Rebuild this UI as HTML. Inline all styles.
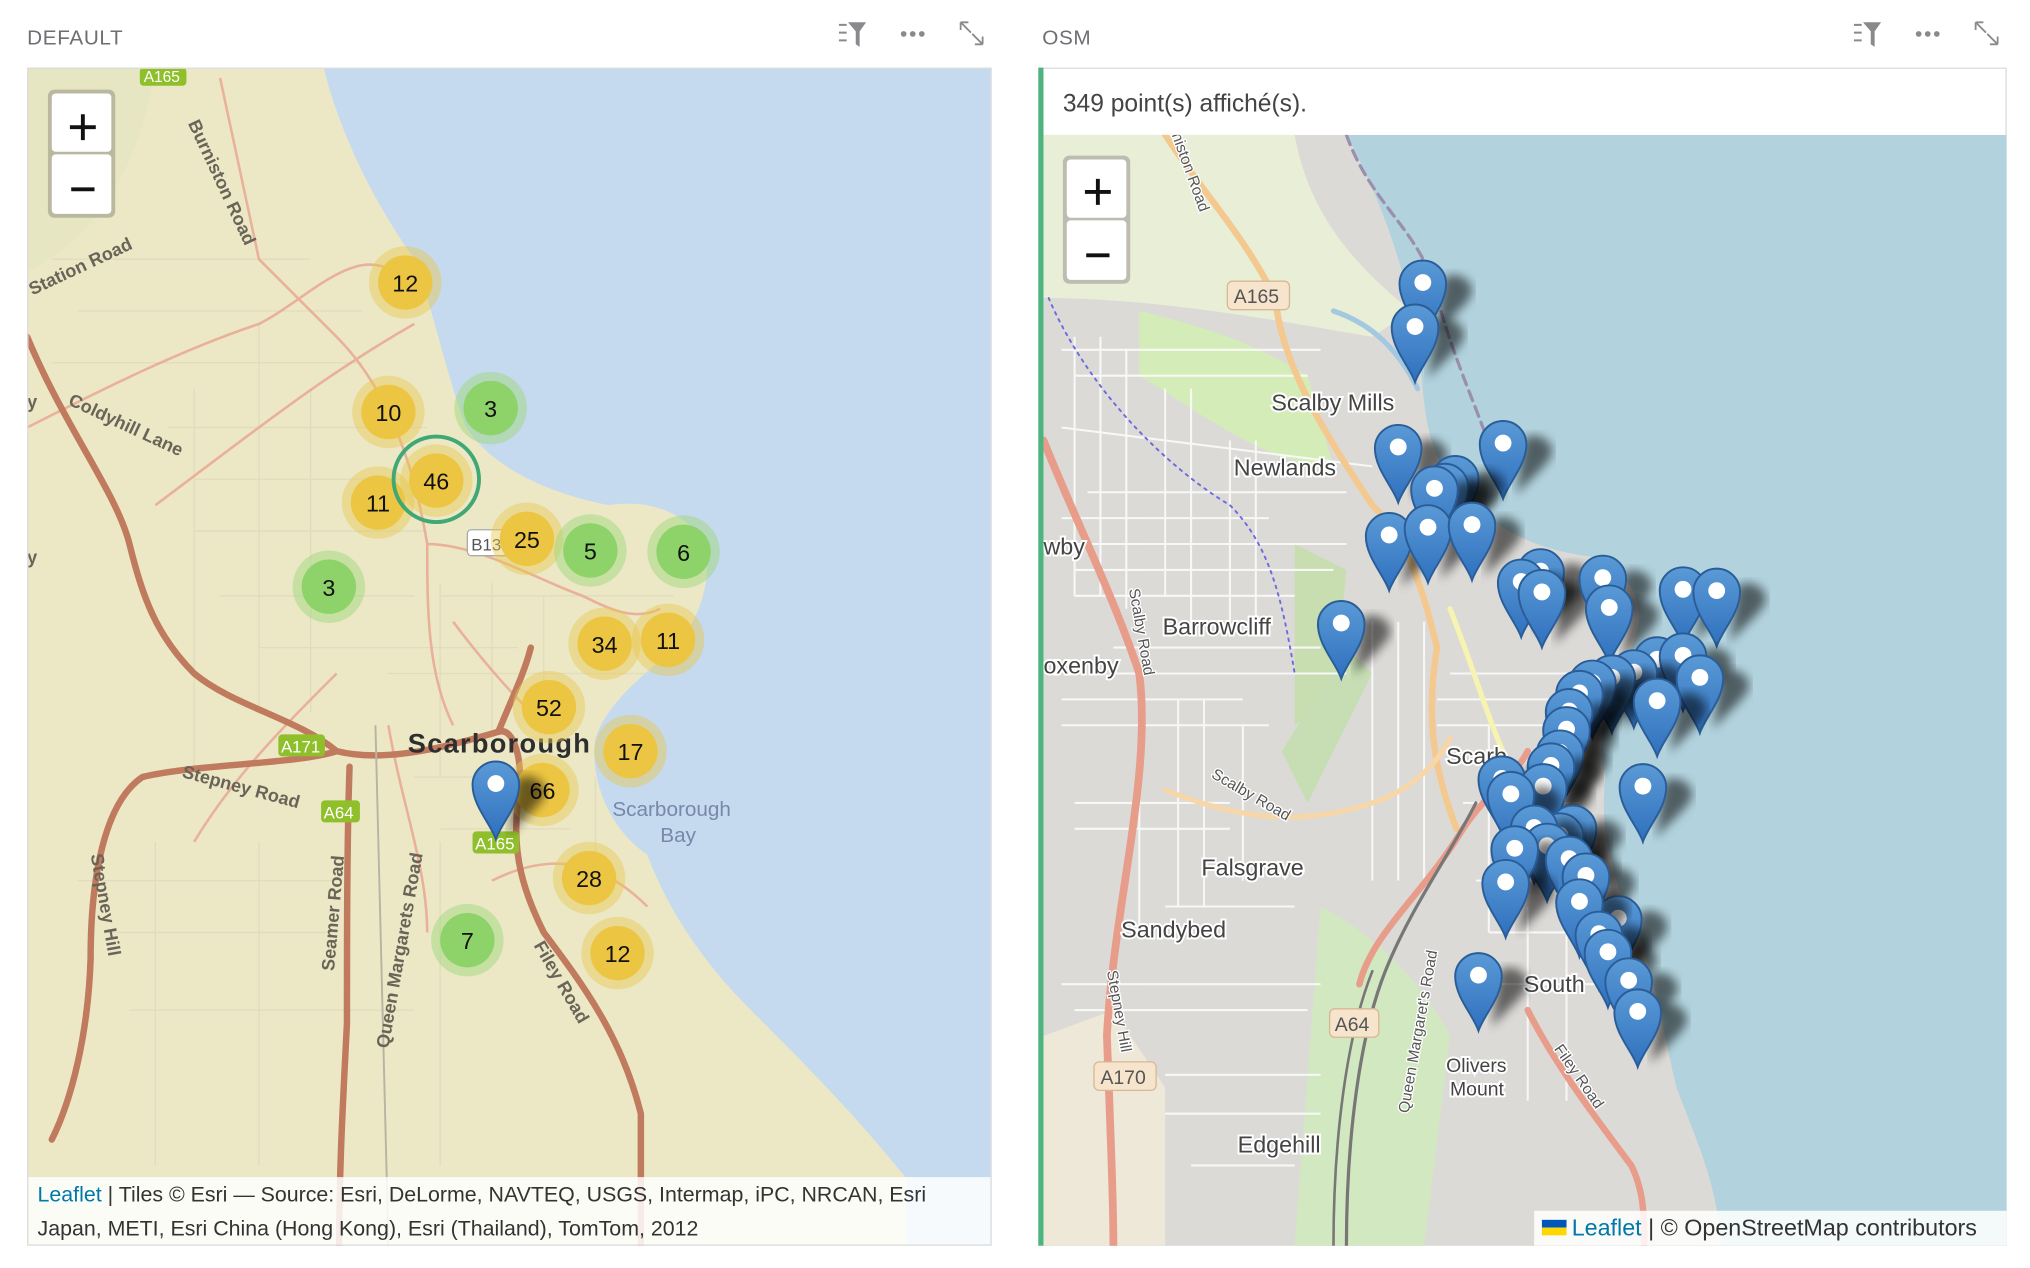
<!DOCTYPE html>
<html><head><meta charset="utf-8"><style>
html,body{margin:0;padding:0;background:#fff;width:2030px;height:1268px;overflow:hidden}
svg{display:block}
text{font-family:"Liberation Sans",sans-serif}
</style></head><body>
<svg width="2030" height="1268" viewBox="0 0 1568 979" xmlns="http://www.w3.org/2000/svg">
<defs>
<clipPath id="cl"><rect x="21" y="52" width="745" height="910"/></clipPath>
<clipPath id="cr"><rect x="806" y="104" width="744" height="858"/></clipPath>
<linearGradient id="mg" x1="0" y1="0" x2="0" y2="1"><stop offset="0" stop-color="#5a9ad6"/><stop offset="1" stop-color="#2f70be"/></linearGradient>
<filter id="bl"><feGaussianBlur stdDeviation="4"/></filter>
<g id="mk"><path d="M2,40 C6,32 30,14 30,6 C30,-6 14,-10 8,-4 Z" fill="#000" opacity="0.55" filter="url(#bl)" transform="translate(8,2)"/>
<path d="M0,44 C-4,32 -18,18 -18,2 A18,18 0 1 1 18,2 C18,18 4,32 0,44 Z" fill="url(#mg)" stroke="#2a5d98" stroke-width="1.5"/>
<circle cx="0" cy="1" r="6.5" fill="#fff"/></g>
<g id="cy"><circle r="28" fill="#e8c84e" opacity="0.45"/><circle r="21" fill="#ecc542"/></g>
<g id="cg"><circle r="28" fill="#9fd87d" opacity="0.5"/><circle r="21" fill="#8ed26a"/></g>
</defs>

<text x="21" y="34" font-size="16" fill="#6e6e73" letter-spacing="0.5">DEFAULT</text>
<text x="805" y="34" font-size="16" fill="#6e6e73" letter-spacing="0.5">OSM</text>
<g fill="#8a8a8e" stroke="#8a8a8e">
<g transform="translate(648,16)"><path d="M0,3h6M0,9h6M0,15h6" stroke-width="1.5"/><path d="M7,1h14l-5,7v12l-3,-2v-10z" stroke="none"/></g>
<g transform="translate(1432,16)"><path d="M0,3h6M0,9h6M0,15h6" stroke-width="1.5"/><path d="M7,1h14l-5,7v12l-3,-2v-10z" stroke="none"/></g>
<circle cx="698" cy="26" r="2.2" stroke="none"/><circle cx="705" cy="26" r="2.2" stroke="none"/><circle cx="712" cy="26" r="2.2" stroke="none"/>
<circle cx="1482" cy="26" r="2.2" stroke="none"/><circle cx="1489" cy="26" r="2.2" stroke="none"/><circle cx="1496" cy="26" r="2.2" stroke="none"/>
<g fill="none" stroke-width="1.4"><path d="M742,17l8,8M742,17v6M742,17h6M759,34l-8,-8M759,34v-6M759,34h-6"/>
<path d="M1526,17l8,8M1526,17v6M1526,17h6M1543,34l-8,-8M1543,34v-6M1543,34h-6"/></g>
</g>

<!-- LEFT MAP -->
<g clip-path="url(#cl)">
<rect x="21" y="52" width="745" height="910" fill="#c5d9ef"/>
<path d="M21,52 L250,52 C262,100 285,150 320,200 C335,240 345,290 360,330 C380,360 420,380 470,390 C500,385 530,395 545,420 C550,450 540,480 520,500 C500,520 470,540 460,570 C455,600 470,640 500,660 C515,700 540,740 580,780 C620,820 660,860 700,910 L700,962 L21,962 Z" fill="#ece8c6"/>
<path d="M21,52 L120,52 C110,120 80,180 21,210 Z" fill="#e4e6c0" opacity="0.7"/>
<g fill="none" stroke="#e0dcbc" stroke-width="1">
<path d="M40,200h200M60,240h220M40,280h240M130,330h200M150,370h160M150,410h180M170,460h150M200,500h200M300,520h200M320,600h120M340,640h100M60,680h200M80,720h180M100,780h220M340,460h180"/>
<path d="M150,300v300M200,250v300M240,300v250M340,450v150M380,450v120M420,460v100M460,600v100M120,650v250M200,650v250M340,650v250"/>
</g>
<g fill="none" stroke="#e9a892" stroke-width="2" opacity="0.85">
<path d="M170,60 L200,200 L260,260 C300,300 320,360 330,420 C330,470 330,520 350,560"/>
<path d="M21,330 C80,300 140,270 200,250 C240,230 280,180 313,218"/>
<path d="M120,390 C200,330 250,290 320,250"/>
<path d="M330,420 C370,420 420,450 450,460 C470,470 490,480 510,470"/>
<path d="M350,480 C380,520 400,540 420,560"/>
<path d="M300,560 C310,620 330,670 330,720"/>
<path d="M260,520 C220,560 180,600 150,650"/>
<path d="M380,680 C420,660 460,660 500,700"/>
</g>
<g fill="none" stroke="#c07a5e" stroke-width="5" stroke-linecap="round">
<path d="M21,260 C50,330 90,380 100,420 C110,460 120,490 150,520 C180,545 230,555 260,580 C300,590 350,575 385,565 C400,560 405,600 400,620 C395,660 405,690 420,720 C450,760 480,800 495,860 L495,962"/>
<path d="M260,580 C230,590 150,590 110,600 C80,620 70,680 70,740 C68,800 55,850 40,880"/>
<path d="M270,592 C268,650 268,720 268,790 C265,850 262,900 262,962"/>
<path d="M385,565 C395,540 405,520 410,500"/>
</g>
<path d="M290,560 L300,962" stroke="#b8b4a4" stroke-width="1.5" fill="none"/>
<rect x="108" y="52" width="36" height="14" rx="3" fill="#8fbf2a"/><text x="111" y="63" font-size="12" fill="#fff">A165</text>
<rect x="215" y="567" width="36" height="17" rx="3" fill="#8fbf2a"/><text x="217" y="581" font-size="13" fill="#fff">A171</text>
<rect x="248" y="618" width="30" height="17" rx="3" fill="#8fbf2a"/><text x="250" y="632" font-size="13" fill="#fff">A64</text>
<rect x="365" y="642" width="36" height="17" rx="3" fill="#8fbf2a"/><text x="367" y="656" font-size="13" fill="#fff">A165</text>
<rect x="361" y="409" width="34" height="20" rx="3" fill="#fff" stroke="#aaa"/><text x="364" y="425" font-size="13" fill="#555">B13</text>
<g fill="#6a6458" font-size="14" font-weight="bold">
<text transform="translate(145,95) rotate(65)">Burniston Road</text>
<text transform="translate(25,228) rotate(-25)">Station Road</text>
<text transform="translate(52,312) rotate(25)">Coldyhill Lane</text>
<text transform="translate(140,600) rotate(15)">Stepney Road</text>
<text transform="translate(258,750) rotate(-85)">Seamer Road</text>
<text transform="translate(300,810) rotate(-80)">Queen Margarets Road</text>
<text transform="translate(412,730) rotate(60)">Filey Road</text>
<text transform="translate(70,660) rotate(80)">Stepney Hill</text>
<text x="21" y="315">y</text><text x="21" y="435">y</text>
</g>
<text x="315" y="581" font-size="21" font-weight="bold" fill="#2e2e2e" letter-spacing="1">Scarborough</text>
<text x="473" y="630" font-size="16" fill="#7788aa">Scarborough</text><text x="510" y="650" font-size="16" fill="#7788aa">Bay</text>
<g font-size="18" fill="#111" text-anchor="middle">
<use href="#cy" x="313" y="218"/><text x="313" y="225">12</text>
<use href="#cy" x="300" y="318"/><text x="300" y="325">10</text>
<use href="#cg" x="379" y="315"/><text x="379" y="322">3</text>
<use href="#cy" x="292" y="388"/><text x="292" y="395">11</text>
<use href="#cy" x="337" y="371"/><circle cx="337" cy="370" r="33" fill="none" stroke="#3fa874" stroke-width="3"/><text x="337" y="378">46</text>
<use href="#cy" x="407" y="416"/><text x="407" y="423">25</text>
<use href="#cg" x="456" y="425"/><text x="456" y="432">5</text>
<use href="#cg" x="528" y="426"/><text x="528" y="433">6</text>
<use href="#cg" x="254" y="453"/><text x="254" y="460">3</text>
<use href="#cy" x="467" y="497"/><text x="467" y="504">34</text>
<use href="#cy" x="516" y="494"/><text x="516" y="501">11</text>
<use href="#cy" x="424" y="546"/><text x="424" y="553">52</text>
<use href="#cy" x="487" y="580"/><text x="487" y="587">17</text>
<use href="#cy" x="419" y="610"/><text x="419" y="617">66</text>
<use href="#cy" x="455" y="678"/><text x="455" y="685">28</text>
<use href="#cg" x="361" y="726"/><text x="361" y="733">7</text>
<use href="#cy" x="477" y="736"/><text x="477" y="743">12</text>
</g>
<use href="#mk" x="383" y="604"/>
<rect x="21" y="909" width="745" height="53" fill="#fff" opacity="0.85"/>
<text x="29" y="928" font-size="16.5" fill="#333"><tspan fill="#0078a8">Leaflet</tspan> | Tiles © Esri — Source: Esri, DeLorme, NAVTEQ, USGS, Intermap, iPC, NRCAN, Esri</text>
<text x="29" y="954" font-size="16.5" fill="#333">Japan, METI, Esri China (Hong Kong), Esri (Thailand), TomTom, 2012</text>
</g>
<rect x="21.5" y="52.5" width="744" height="909" fill="none" stroke="#dcdcdc"/>
<g>
<rect x="37" y="69" width="52" height="99" rx="5" fill="#bbb8a0"/>
<rect x="40" y="72" width="46" height="45" rx="3" fill="#fff"/><rect x="40" y="119" width="46" height="46" rx="3" fill="#fff"/>
<path d="M54,98h20M64,88v20M55,146h18" stroke="#111" stroke-width="3"/>
</g>

<!-- RIGHT -->
<rect x="802" y="52" width="748" height="52" fill="#fff"/>
<rect x="802.5" y="52.5" width="747" height="909" fill="none" stroke="#dcdcdc"/>
<text x="821" y="86" font-size="19" fill="#444">349 point(s) affiché(s).</text>
<g clip-path="url(#cr)">
<rect x="806" y="104" width="744" height="858" fill="#b2d3de"/>
<path d="M806,104 L1040,104 C1070,160 1085,210 1095,260 C1100,300 1098,340 1120,370 C1150,410 1190,425 1230,430 C1260,440 1275,470 1260,500 C1245,530 1230,560 1240,600 C1235,640 1245,680 1265,720 C1280,760 1285,800 1295,840 C1310,880 1325,910 1330,962 L806,962 Z" fill="#dcdad7"/>
<path d="M806,104 L1000,104 C1010,160 1040,200 1090,240 L1060,260 C1000,250 900,230 806,230 Z" fill="#e8efd6"/>
<path d="M880,240 C920,250 960,260 1010,290 L1030,360 C980,360 930,320 880,290 Z" fill="#d4edb8"/>
<path d="M1000,420 L1040,440 L1030,540 L1000,560 Z" fill="#c8deb0"/>
<path d="M1020,700 C1060,720 1100,760 1120,800 L1100,962 L1000,962 Z" fill="#d2e8c0"/>
<path d="M1040,500 L1060,520 L1010,620 L990,580 Z" fill="#c7deb5"/>
<path d="M806,800 L860,780 L900,840 L900,962 L806,962 Z" fill="#ede8d8"/>
<g fill="none" stroke="#fbfbfb" stroke-width="1.6" opacity="0.9">
<path d="M820,270h200M830,290h180M820,330l240,30M840,380h200M820,400h160M820,420h220M830,440h200M830,460h170M860,500h160M860,520h180M820,540h140M820,560h160M1120,520h100M1110,540h100M1110,560h90M1130,620h90M1140,680h80M830,620h120M830,640h120M900,700h100M820,760h200M830,780h180M900,830h120M900,860h120M920,900h80M1150,720h100M1150,760h100"/>
<path d="M830,260v200M850,260v200M870,270v200M900,300v160M920,300v180M950,340v140M970,340v140M1060,480v200M1080,480v200M1100,480v200M1150,560v160M880,520v200M910,540v160M930,540v160M960,560v120M1180,700v150M1210,700v150"/>
</g>
<g fill="none" stroke-linecap="round">
<path d="M900,104 C930,150 960,180 985,230 C990,280 1020,330 1060,390 C1090,420 1100,460 1110,500 C1100,560 1110,600 1125,640" stroke="#f3c98f" stroke-width="5"/>
<path d="M806,340 C830,400 860,460 880,520 C890,600 860,700 855,800 C858,880 860,930 860,962" stroke="#e89c8a" stroke-width="6"/>
<path d="M1050,760 C1060,720 1100,690 1130,640 C1150,610 1170,600 1180,580" stroke="#e89c8a" stroke-width="5"/>
<path d="M1180,780 C1200,820 1230,860 1260,900 C1270,920 1270,940 1270,962" stroke="#e89c8a" stroke-width="5"/>
<path d="M900,610 C950,630 1000,640 1060,620 C1090,610 1110,590 1120,570" stroke="#f7d6a8" stroke-width="4"/>
<path d="M1120,470 C1140,520 1150,560 1170,600" stroke="#f6f4b0" stroke-width="4"/>
<path d="M1040,962 C1040,880 1050,800 1070,750 C1090,700 1120,660 1140,620" stroke="#777" stroke-width="2.5"/>
<path d="M1030,962 C1030,880 1040,800 1060,750" stroke="#777" stroke-width="2"/>
<path d="M1030,240 C1060,250 1080,270 1095,300" stroke="#a3c8e0" stroke-width="4"/>
<path d="M810,230 C840,300 900,360 950,390 C980,420 990,460 1000,520" stroke="#6c6ce0" stroke-width="1.5" stroke-dasharray="2,4"/>
<path d="M1040,104 C1060,160 1100,180 1110,230 C1130,300 1150,330 1160,380" stroke="#9a8fae" stroke-width="2.5" stroke-dasharray="8,5"/>
</g>
<rect x="948" y="217" width="48" height="22" rx="4" fill="#f6e4cc" stroke="#d8b893"/><text x="953" y="234" font-size="15" fill="#555">A165</text>
<rect x="1027" y="779" width="38" height="22" rx="4" fill="#f6e4cc" stroke="#d8b893"/><text x="1031" y="796" font-size="15" fill="#555">A64</text>
<rect x="845" y="820" width="48" height="22" rx="4" fill="#f6e4cc" stroke="#d8b893"/><text x="850" y="837" font-size="15" fill="#555">A170</text>
<g font-size="18" fill="#444" stroke="#fff" stroke-width="3" paint-order="stroke">
<text x="982" y="317">Scalby Mills</text><text x="953" y="367">Newlands</text>
<text x="806" y="428">wby</text><text x="898" y="490">Barrowcliff</text><text x="806" y="520">oxenby</text>
<text x="928" y="676">Falsgrave</text><text x="866" y="724">Sandybed</text><text x="1117" y="590">Scarb</text>
<text x="1177" y="766">South</text><text x="956" y="890">Edgehill</text>
<text x="1117" y="828" font-size="15">Olivers</text><text x="1120" y="846" font-size="15">Mount</text>
</g>
<g font-size="12" fill="#555" stroke="#fff" stroke-width="2" paint-order="stroke">
<text transform="translate(905,104) rotate(70)">niston Road</text>
<text transform="translate(872,455) rotate(80)">Scalby Road</text>
<text transform="translate(935,600) rotate(30)">Scalby Road</text>
<text transform="translate(855,750) rotate(80)">Stepney Hill</text>
<text transform="translate(1088,860) rotate(-80)">Queen Margaret's Road</text>
<text transform="translate(1200,810) rotate(55)">Filey Road</text>
</g>
<g>
<use href="#mk" x="1099" y="217"/><use href="#mk" x="1093" y="251"/>
<use href="#mk" x="1161" y="341"/><use href="#mk" x="1080" y="344"/>
<use href="#mk" x="1124" y="368"/><use href="#mk" x="1116" y="374"/><use href="#mk" x="1108" y="376"/>
<use href="#mk" x="1073" y="412"/><use href="#mk" x="1103" y="406"/><use href="#mk" x="1137" y="404"/>
<use href="#mk" x="1036" y="480"/>
<use href="#mk" x="1190" y="440"/><use href="#mk" x="1175" y="448"/><use href="#mk" x="1191" y="456"/>
<use href="#mk" x="1238" y="445"/><use href="#mk" x="1243" y="468"/>
<use href="#mk" x="1300" y="454"/><use href="#mk" x="1326" y="455"/>
<use href="#mk" x="1280" y="508"/><use href="#mk" x="1300" y="505"/><use href="#mk" x="1262" y="518"/>
<use href="#mk" x="1245" y="522"/><use href="#mk" x="1230" y="526"/><use href="#mk" x="1220" y="534"/>
<use href="#mk" x="1212" y="548"/><use href="#mk" x="1210" y="562"/><use href="#mk" x="1313" y="522"/>
<use href="#mk" x="1280" y="540"/>
<use href="#mk" x="1205" y="580"/><use href="#mk" x="1198" y="590"/><use href="#mk" x="1269" y="606"/>
<use href="#mk" x="1160" y="600"/><use href="#mk" x="1192" y="606"/><use href="#mk" x="1167" y="612"/>
<use href="#mk" x="1215" y="638"/><use href="#mk" x="1205" y="644"/><use href="#mk" x="1185" y="638"/>
<use href="#mk" x="1195" y="652"/><use href="#mk" x="1170" y="654"/><use href="#mk" x="1212" y="662"/>
<use href="#mk" x="1225" y="675"/><use href="#mk" x="1163" y="680"/>
<use href="#mk" x="1250" y="708"/><use href="#mk" x="1220" y="695"/><use href="#mk" x="1235" y="720"/>
<use href="#mk" x="1242" y="734"/><use href="#mk" x="1258" y="756"/><use href="#mk" x="1142" y="752"/>
<use href="#mk" x="1265" y="780"/>
</g>
<rect x="1185" y="935" width="365" height="27" fill="#fff" opacity="0.85"/>
<rect x="1191" y="942" width="19" height="6" fill="#0057b7"/><rect x="1191" y="948" width="19" height="6" fill="#ffd700"/>
<text x="1214" y="954" font-size="18" fill="#333"><tspan fill="#0078a8">Leaflet</tspan> | © OpenStreetMap contributors</text>
</g>
<rect x="802" y="52" width="4" height="910" fill="#4cb57d"/>
<g>
<rect x="821" y="120" width="52" height="99" rx="5" fill="#bdbcb0"/>
<rect x="824" y="123" width="46" height="45" rx="3" fill="#fff"/><rect x="824" y="170" width="46" height="46" rx="3" fill="#fff"/>
<path d="M838,148h20M848,138v20M839,197h18" stroke="#111" stroke-width="3"/>
</g>
</svg>
</body></html>
